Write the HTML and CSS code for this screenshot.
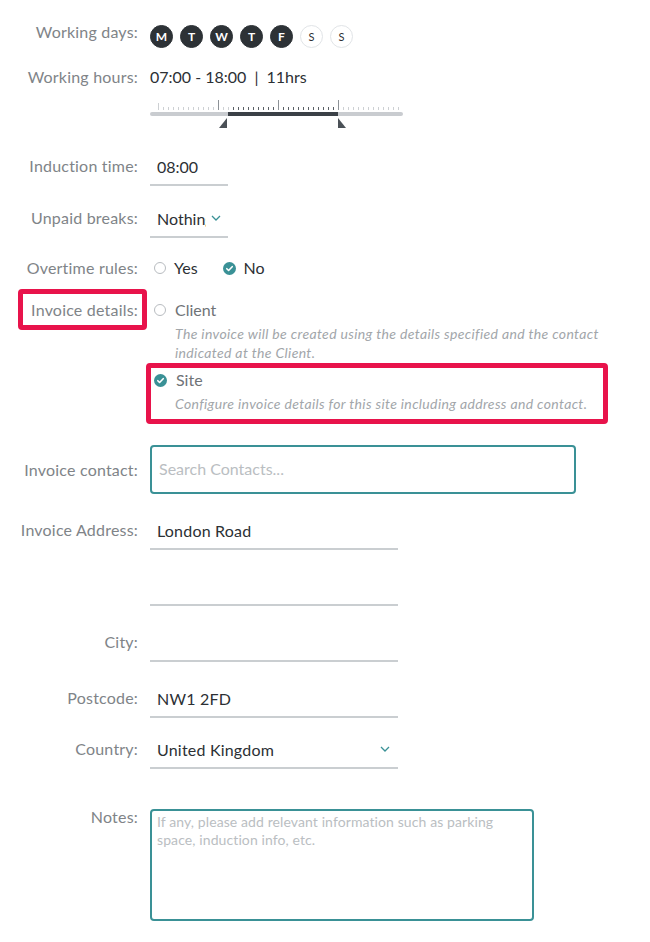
FILE: index.html
```html
<!DOCTYPE html>
<html>
<head>
    <meta charset="UTF-8"/>
    <title>Site details</title>
    <link rel="stylesheet" href="styles.css">
</head>
<body>
<form class="site-form" name="site">
    <div class="row row-days">
        <label class="label">Working days:</label>
        <div class="days">
            <span class="day on">M</span>
            <span class="day on">T</span>
            <span class="day on">W</span>
            <span class="day on">T</span>
            <span class="day on">F</span>
            <span class="day">S</span>
            <span class="day">S</span>
        </div>
    </div>

    <div class="row row-hours">
        <label class="label">Working hours:</label>
        <div class="hours">07:00 - 18:00<span class="sep">|</span>11hrs</div>
    </div>

    <div class="row row-slider">
        <span></span>
        <svg class="slider" width="256" height="32" viewBox="0 0 256 32">
            <g id="ticks"></g>
            <rect x="0" y="14" width="253" height="4" rx="2" fill="#c9ccd0"/>
            <rect x="78" y="14" width="110" height="4" fill="#3b4147"/>
            <polygon points="77,20 77,30 69,30" fill="#4b5157"/>
            <polygon points="188,20 188,30 196,30" fill="#4b5157"/>
        </svg>
    </div>

    <div class="row row-field row-induction">
        <label class="label">Induction time:</label>
        <input class="line short" name="induction" value="08:00">
    </div>

    <div class="row row-field row-breaks">
        <label class="label">Unpaid breaks:</label>
        <div class="line short select">
            <span class="select-value">Nothing</span>
            <svg class="chevron" width="10" height="6" viewBox="0 0 10 6"><path d="M1 1l4 4 4-4"/></svg>
        </div>
    </div>

    <div class="row row-overtime">
        <label class="label">Overtime rules:</label>
        <div class="radios">
            <span class="radio-item"><span class="radio"></span>Yes</span>
            <span class="radio-item"><span class="radio checked"><svg width="13" height="13" viewBox="0 0 13 13"><path d="M3.8 6.7l1.8 1.8 3.6-3.8"/></svg></span>No</span>
        </div>
    </div>

    <div class="row row-invoice">
        <label class="label marked label-marked">Invoice details:</label>
        <div class="invoice-options">
            <div class="option">
                <span class="radio-item"><span class="radio"></span>Client</span>
                <p class="hint">The invoice will be created using the details specified and the contact indicated at the Client.</p>
            </div>
            <div class="option option-site marked">
                <span class="radio-item"><span class="radio checked"><svg width="13" height="13" viewBox="0 0 13 13"><path d="M3.8 6.7l1.8 1.8 3.6-3.8"/></svg></span>Site</span>
                <p class="hint">Configure invoice details for this site including address and contact.</p>
            </div>
        </div>
    </div>

    <div class="row row-contact">
        <label class="label">Invoice contact:</label>
        <input class="box" name="contact" placeholder="Search Contacts...">
    </div>

    <div class="row row-field row-address">
        <label class="label">Invoice Address:</label>
        <input class="line long" name="address1" value="London Road">
    </div>

    <div class="row row-field">
        <span></span>
        <input class="line long" name="address2">
    </div>

    <div class="row row-field">
        <label class="label">City:</label>
        <input class="line long" name="city">
    </div>

    <div class="row row-field">
        <label class="label">Postcode:</label>
        <input class="line long" name="postcode" value="NW1 2FD">
    </div>

    <div class="row row-field row-country">
        <label class="label">Country:</label>
        <div class="line long select">
            <span class="select-value">United Kingdom</span>
            <svg class="chevron" width="10" height="6" viewBox="0 0 10 6"><path d="M1 1l4 4 4-4"/></svg>
        </div>
    </div>

    <div class="row row-notes">
        <label class="label">Notes:</label>
        <textarea class="box notes" name="notes" placeholder="If any, please add relevant information such as parking space, induction info, etc."></textarea>
    </div>
</form>

<script>
    // hour scale: 10px per hour, a tick every half hour, taller ones every 6 hours
    var ticks = document.getElementById('ticks');
    var ns = 'http://www.w3.org/2000/svg';
    for (var x = 8; x <= 248; x += 5) {
        var line = document.createElementNS(ns, 'line');
        var tall = (x - 8) % 60 === 0 && x > 8 && x < 248;
        var active = x > 78 && x < 188;
        line.setAttribute('x1', x + 0.5);
        line.setAttribute('x2', x + 0.5);
        line.setAttribute('y1', tall ? 2 : (x === 8 ? 5 : 9));
        line.setAttribute('y2', 12);
        line.setAttribute('stroke', tall ? '#8d9297' : (active ? '#5a6066' : '#cdd0d3'));
        line.setAttribute('stroke-width', 1);
        ticks.appendChild(line);
    }
</script>
</body>
</html>
```

FILE: styles.css
```css
*{
    margin: 0;
    padding: 0;
    box-sizing: border-box;
}
body{
    font-family: Lato, "Open Sans", sans-serif;
    background: #fff;
    color: #2c3034;
}
.site-form{
    padding-top: 24px;
}
.row{
    display: grid;
    grid-template-columns: 138px 1fr;
    column-gap: 12px;
    align-items: center;
}
.label{
    text-align: right;
    font-size: 16px;
    letter-spacing: 0.2px;
    line-height: 20px;
    color: #808488;
    white-space: nowrap;
}

/* working days */
.row-days{
    height: 24px;
}
.row-days .label{
    align-self: start;
    margin-top: -2px;
}
.days{
    display: flex;
    gap: 7px;
}
.day{
    width: 23px;
    height: 23px;
    border-radius: 50%;
    border: 1.5px solid #e1e4e7;
    display: flex;
    align-items: center;
    justify-content: center;
    font-size: 11px;
    color: #2c3034;
}
.day.on{
    background: #2d3236;
    border-color: #2d3236;
    color: #fff;
    font-weight: bold;
    font-size: 12px;
}

/* working hours */
.row-hours{
    margin-top: 18px;
    height: 22px;
}
.hours{
    font-size: 16px;
    line-height: 22px;
}
.sep{
    margin: 0 8px;
}
.row-slider{
    margin-top: 10px;
    height: 30px;
    align-items: start;
}
.slider{
    display: block;
}

/* inputs with an underline */
.row-field{
    margin-top: 18px;
    height: 38px;
}
.row-field .label{
    padding-bottom: 2px;
}
.row-induction{
    margin-top: 20px;
}
.row-breaks{
    margin-top: 14px;
}
.line{
    height: 38px;
    border: none;
    border-bottom: 2px solid #caced1;
    padding: 0 7px;
    font-family: Lato, "Open Sans", sans-serif;
    font-size: 16px;
    letter-spacing: 0.2px;
    color: #2c3034;
    background: transparent;
    outline: none;
}
.short{
    width: 78px;
    letter-spacing: 0;
}
.long{
    width: 248px;
}
.select{
    display: flex;
    align-items: center;
    gap: 5px;
}
.select-value{
    flex: 1;
    overflow: hidden;
    white-space: nowrap;
}
.row-breaks .select-value{
    flex: none;
    width: 49px;
}
.chevron{
    flex: none;
    fill: none;
    stroke: #3a9196;
    stroke-width: 1.3;
}
.row-country .chevron{
    margin-right: 1px;
}

/* radios */
.row-overtime{
    margin-top: 20px;
    height: 20px;
}
.radios{
    display: flex;
    gap: 21px;
}
.radio-item{
    display: flex;
    align-items: center;
    gap: 8px;
    font-size: 16px;
    line-height: 20px;
    padding-left: 4px;
}
.radio{
    width: 12px;
    height: 12px;
    border-radius: 50%;
    border: 1px solid #b8bcc0;
    display: flex;
}
.radio.checked{
    width: 13px;
    height: 13px;
    border: none;
    background: #3a9196;
}
.radio.checked path{
    fill: none;
    stroke: #fff;
    stroke-width: 1.6;
    stroke-linecap: round;
    stroke-linejoin: round;
}

/* invoice details */
.row-invoice{
    margin-top: 22px;
    align-items: start;
}
.invoice-options{
    width: 470px;
}
.option .radio-item{
    gap: 9px;
    color: #6f7377;
}
.hint{
    margin-top: 4px;
    padding-left: 25px;
    font-size: 14px;
    letter-spacing: 0.35px;
    line-height: 19px;
    font-style: italic;
    color: #a2a6aa;
}
.option-site{
    margin-top: 8px;
}
.marked{
    position: relative;
}
.marked::after{
    content: "";
    position: absolute;
    border: 5px solid #e8134b;
    border-radius: 4px;
    pointer-events: none;
}
.label-marked::after{
    left: 18px;
    right: -9px;
    top: -11px;
    bottom: -10px;
}
.option-site::after{
    left: -4px;
    right: 12px;
    top: -7px;
    bottom: -11px;
}

/* boxed inputs */
.box{
    border: 2px solid #3a9196;
    border-radius: 4px;
    font-family: Lato, "Open Sans", sans-serif;
    color: #2c3034;
    outline: none;
    background: #fff;
}
.box::placeholder{
    color: #babec2;
}
.row-contact{
    margin-top: 32px;
}
.row-contact .box{
    width: 426px;
    height: 49px;
    padding: 0 7px 2px;
    font-size: 16px;
}
.row-address{
    margin-top: 18px;
}
.row-country{
    margin-top: 13px;
}
.row-notes{
    margin-top: 40px;
    align-items: start;
}
.row-notes .label{
    margin-top: -2px;
}
.notes{
    width: 384px;
    height: 112px;
    padding: 2px 5px;
    font-size: 14px;
    letter-spacing: 0.1px;
    line-height: 18px;
    resize: none;
}
```
